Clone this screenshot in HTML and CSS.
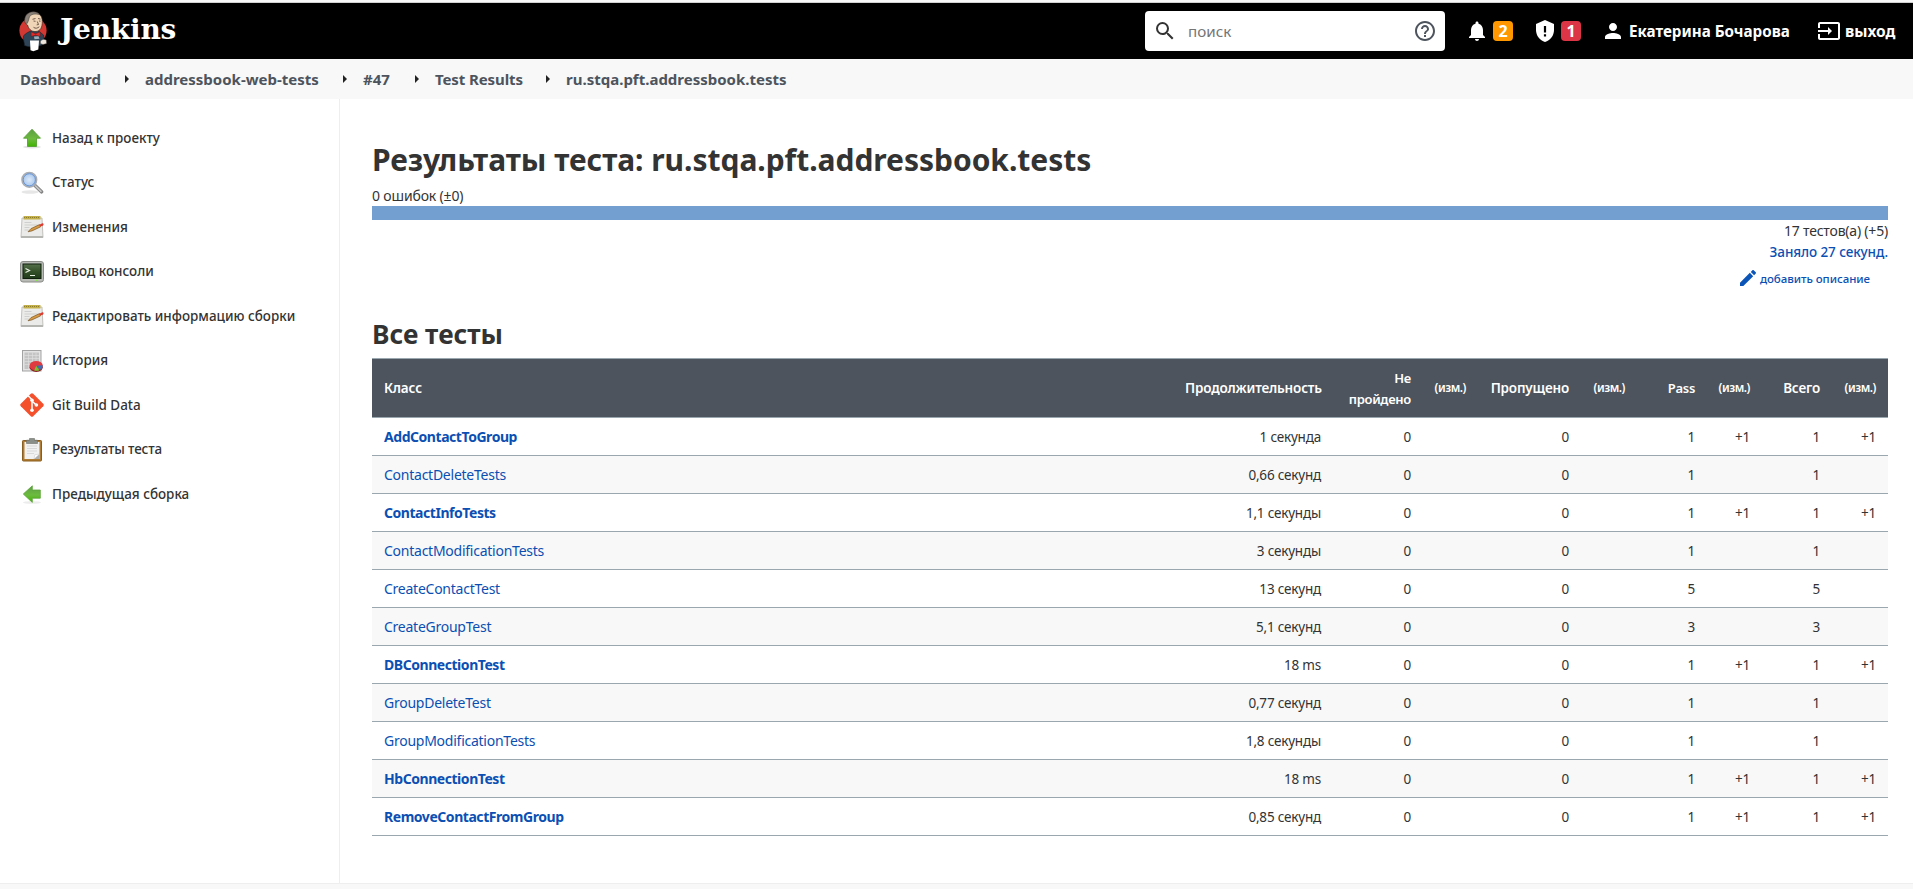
FILE: index.html
```html
<!DOCTYPE html>
<html lang="ru">
<head>
<meta charset="utf-8">
<title>ru.stqa.pft.addressbook.tests [Jenkins]</title>
<link rel="stylesheet" href="styles.css">
</head>
<body>
<svg class="defs" width="0" height="0">
  <defs>
    <linearGradient id="green" x1="0" y1="0" x2="0" y2="1"><stop offset="0" stop-color="#5c9e45"/><stop offset=".55" stop-color="#6dbb3f"/><stop offset="1" stop-color="#3fb400"/></linearGradient>
    <linearGradient id="screen" x1="0" y1="0" x2="0" y2="1"><stop offset="0" stop-color="#55704b"/><stop offset=".5" stop-color="#34512a"/><stop offset="1" stop-color="#1f3a18"/></linearGradient>
    <radialGradient id="lens"><stop offset="0" stop-color="#dceafa"/><stop offset="1" stop-color="#a3c3ea"/></radialGradient>
    <symbol id="notepad" viewBox="0 0 24 24">
      <path d="M2 3h20l1 19.500H1z" fill="#ebebe9" stroke="#b5b4b0" stroke-width=".8"/>
      <path d="M1 21h22v2H1z" fill="#b5b5b2"/>
      <path d="M3.500 1h17v3.500h-17z" fill="#c4b04a"/>
      <path d="M4 2.500h16" stroke="#8d7c2a" stroke-dasharray="1 1"/>
      <path d="M4.500 7.500h7M4.500 10h14M4.500 12.500h5M4.500 15h4" stroke="#c8c8c8" stroke-width=".8"/>
      <path d="M8 16.800l3-3.200 8.500-4 1 2.300-8.500 4z" fill="#d79b45" stroke="#6d4a1c" stroke-width=".6"/>
      <path d="M19.300 9.800l3-1.500c1.200-.2 1.700 1.300.8 2l-2.600 1.500z" fill="#de3a2e"/>
    </symbol>
  </defs>
</svg>
<div class="topline"></div>
<header class="header">
  <a class="logo">
    <svg class="logo-mark" viewBox="0 0 30 41" width="30" height="41">
      <ellipse cx="15" cy="19.500" rx="13.600" ry="13.200" fill="#d33833"/>
      <path d="M5.500 25c2-3 6-4.500 9-5.500l6 .5 5 4 .5 5-2 5c-4 2-13 2.500-17.500.5 0-3-1.500-6-1-9.500z" fill="#2f4557" stroke="#16222c" stroke-width=".6"/>
      <path d="M7.500 9C7.500 4 11 1.200 15.500 1.200c5.500 0 9 4 8.800 9.300 0 5.500-1.600 9.500-6.300 10-5.500.5-7.500-3.500-8.500-6.500C7.500 13.500 7 11 7.500 9z" fill="#f0d6b7" stroke="#3a2d26" stroke-width=".7"/>
      <path d="M7 12C5.500 6 9 .8 15.500.8c2.500 0 5 1 6.500 3-5-1.600-9-.6-10.500 2-.6 2-.9 4-2.300 6.600z" fill="#8a837b" stroke="#3a332d" stroke-width=".5"/>
      <path d="M14.500 8.300l3-.8M20 7.500l2.500.6M15.500 10l2 .3M21 10l1.500.2M19.300 10.500l1.200 3-1.800.4M15.500 16.300c2 1.500 4 1 5.800-.6" fill="none" stroke="#503a30" stroke-width=".8"/>
      <path d="M13 20.800l4.500 2 4.500-2 .3 4.700-4.800-1.400-4.300 1.500z" fill="#e12b29" stroke="#6e1615" stroke-width=".5"/>
      <path d="M16 25.500l4.500-.3 1 2.500-5 .6z" fill="#9fb0bd"/>
      <path d="M12 29.500h9l-.7 9-5 1.800-2.800-1z" fill="#fff"/>
      <path d="M22.500 30c1.500-2 4.500-2 5.800-.8l.2 3.300-3.500 1-2.500-1z" fill="#ece6df" stroke="#5a5048" stroke-width=".4"/>
    </svg>
    <span class="logo-name">Jenkins</span>
  </a>
  <div class="search">
    <svg class="i-search" viewBox="0 0 24 24" width="24" height="24"><path fill="#333" d="M15.500 14h-.79l-.28-.27A6.471 6.471 0 0 0 16 9.500 6.500 6.500 0 1 0 9.500 16c1.610 0 3.090-.59 4.230-1.570l.27.280v.790l5 4.990L20.490 19l-4.990-5zm-6 0C7.010 14 5 11.990 5 9.500S7.010 5 9.500 5 14 7.010 14 9.500 11.990 14 9.500 14z"/></svg>
    <span class="search-text">поиск</span>
    <svg class="i-help" viewBox="0 0 24 24" width="24" height="24"><path fill="#4d545d" d="M11 18h2v-2h-2v2zm1-16C6.480 2 2 6.480 2 12s4.480 10 10 10 10-4.480 10-10S17.520 2 12 2zm0 18c-4.410 0-8-3.590-8-8s3.590-8 8-8 8 3.590 8 8-3.590 8-8 8zm0-14c-2.210 0-4 1.790-4 4h2c0-1.100.9-2 2-2s2 .9 2 2c0 2-3 1.750-3 5h2c0-2.250 3-2.500 3-5 0-2.210-1.790-4-4-4z"/></svg>
  </div>
  <a class="alert">
    <svg viewBox="0 0 24 24" width="24" height="24"><path fill="#fff" d="M12 22c1.100 0 2-.9 2-2h-4c0 1.100.9 2 2 2zm6-6v-5c0-3.070-1.640-5.640-4.500-6.320V4c0-.83-.67-1.500-1.500-1.500s-1.500.67-1.500 1.500v.68C7.630 5.360 6 7.920 6 11v5l-2 2v1h16v-1l-2-2z"/></svg>
    <span class="badge orange">2</span>
  </a>
  <a class="alert security">
    <svg viewBox="0 0 24 24" width="24" height="24"><path fill="#fff" d="M12 1L3 5v6c0 5.550 3.840 10.740 9 12 5.160-1.260 9-6.450 9-12V5z"/><path fill="#000" d="M10.900 7h2.200v6.500h-2.200zM10.900 15.200h2.200v2.200h-2.200z"/></svg>
    <span class="badge red">1</span>
  </a>
  <a class="user">
    <svg viewBox="0 0 24 24" width="24" height="24"><path fill="#fff" d="M12 12c2.210 0 4-1.790 4-4s-1.790-4-4-4-4 1.790-4 4 1.790 4 4 4zm0 2c-2.670 0-8 1.340-8 4v2h16v-2c0-2.660-5.330-4-8-4z"/></svg>
    <span class="user-name">Екатерина Бочарова</span>
  </a>
  <a class="logout">
    <svg viewBox="0 0 24 24" width="24" height="24"><path fill="#fff" d="M21 3.010H3c-1.100 0-2 .9-2 2V9h2V4.990h18v14.030H3V15H1v4.010c0 1.100.9 1.980 2 1.980h18c1.100 0 2-.88 2-1.980v-14c0-1.110-.9-2-2-2zM11 16l4-4-4-4v3H1v2h10v3z"/></svg>
    <span class="logout-text">выход</span>
  </a>
</header>
<nav class="crumbs">
  <a class="c1">Dashboard</a><i class="tri"></i>
  <a class="c2">addressbook-web-tests</a><i class="tri"></i>
  <a class="c3">#47</a><i class="tri"></i>
  <a class="c4">Test Results</a><i class="tri"></i>
  <a class="c5">ru.stqa.pft.addressbook.tests</a>
</nav>
<div class="page">
  <aside class="side">
    <a class="task"><svg viewBox="0 0 24 24" width="24" height="24"><ellipse cx="12" cy="21" rx="9" ry="1.500" fill="#e4e4e4"/><path d="M12 3.200l8.500 9h-4V20.500h-9v-8.300h-4z" fill="url(#green)" stroke="#4c9a2a" stroke-width=".8"/></svg><span>Назад к проекту</span></a>
    <a class="task"><svg viewBox="0 0 24 24" width="24" height="24"><ellipse cx="10" cy="21" rx="8.500" ry="1.700" fill="#e6e6e6"/><path d="M15 14.500l6.500 6.300" stroke="#858585" stroke-width="3.600" stroke-linecap="round"/><path d="M15.500 15l5.500 5.300" stroke="#c8c8c8" stroke-width="1.600" stroke-linecap="round"/><circle cx="9.300" cy="8.800" r="7.300" fill="url(#lens)" stroke="#a9adb2" stroke-width="1.600"/><circle cx="9.300" cy="8.800" r="6.100" fill="none" stroke="#5f8fd0" stroke-width=".9"/></svg><span>Статус</span></a>
    <a class="task"><svg width="24" height="24"><use href="#notepad"/></svg><span>Изменения</span></a>
    <a class="task"><svg viewBox="0 0 24 24" width="24" height="24"><rect x=".5" y="1.500" width="23" height="20.500" rx="2.500" fill="#b9bbb6" stroke="#8b8d88"/><rect x="3" y="4" width="18" height="14.500" fill="url(#screen)" stroke="#10200c"/><path d="M5.500 8.500l4 2-4 2M10 15.500h5" fill="none" stroke="#e8f0e4" stroke-width="1.200"/><circle cx="16.500" cy="20.300" r=".7" fill="#7ff03a"/></svg><span>Вывод консоли</span></a>
    <a class="task"><svg width="24" height="24"><use href="#notepad"/></svg><span>Редактировать информацию сборки</span></a>
    <a class="task"><svg viewBox="0 0 24 24" width="24" height="24"><rect x="2.500" y="1.500" width="18.500" height="20.500" fill="#e4e4e4" stroke="#a3a3a3"/><rect x="4.500" y="3.500" width="14.500" height="16.500" fill="#c4c4c4"/><path d="M4.500 6.500h14.500M4.500 9.500h14.500M4.500 12.500h14.500M4.500 15.500h14.500M8.500 3.500v16.500M12.500 3.500v16.500M16 3.500v16.500" stroke="#e2e2e2" stroke-width=".6"/><ellipse cx="16.200" cy="18.300" rx="6.600" ry="4.600" fill="#8d1c22"/><ellipse cx="16.200" cy="16.800" rx="6.600" ry="4.900" fill="#df3a40"/><path d="M16.200 16.800l6.500-.5c.3 2.200-.9 3.700-2.700 4.400z" fill="#3d6fb5"/><path d="M16.200 16.800l3.200 4.500c-1.800.7-3.600.7-5.200.2z" fill="#6ec52c"/></svg><span>История</span></a>
    <a class="task"><svg viewBox="0 0 24 24" width="24" height="24"><path d="M10.800.8a1.700 1.700 0 0 1 2.400 0l10 10a1.700 1.700 0 0 1 0 2.400l-10 10a1.700 1.700 0 0 1-2.400 0l-10-10a1.700 1.700 0 0 1 0-2.400z" fill="#f4502c"/><path d="M8.200 2.800L12 6.800v10.700M12 8l4.200 4" fill="none" stroke="#fff" stroke-width="1.500"/><circle cx="12" cy="7.300" r="1.800" fill="#fff"/><circle cx="12" cy="17.200" r="1.800" fill="#fff"/><circle cx="16.400" cy="12" r="1.800" fill="#fff"/></svg><span>Git Build Data</span></a>
    <a class="task tight"><svg viewBox="0 0 24 24" width="24" height="24"><rect x="2.500" y="2.500" width="19" height="20.500" rx=".8" fill="#b07c33" stroke="#8a5c1d"/><rect x="4.500" y="4" width="15" height="17" fill="#f1f1f1"/><path d="M7 8h10M7 10.500h10M7 13h10M7 15.500h7" stroke="#d9d9d9"/><path d="M14 21l5.500-5v5z" fill="#aeaeae"/><path d="M14 21l.8-4.200L19.500 16z" fill="#fff" stroke="#bbb" stroke-width=".4"/><path d="M6.500 2.200h3V.5h5v1.700h3v3.300h-11z" fill="#8b8f8a" stroke="#6b6f6a" stroke-width=".6"/></svg><span>Результаты теста</span></a>
    <a class="task"><svg viewBox="0 0 24 24" width="24" height="24"><ellipse cx="12" cy="20.500" rx="9" ry="1.300" fill="#ececec"/><path d="M3.300 12L12.300 3.800v4.200h8v8.200h-8v4.200z" fill="url(#green)" stroke="#5da33a" stroke-width=".8"/></svg><span>Предыдущая сборка</span></a>
  </aside>
  <main class="main">
    <h1>Результаты теста: ru.stqa.pft.addressbook.tests</h1>
    <div class="fails">0 ошибок (±0)</div>
    <div class="bar"></div>
    <div class="total">17 тестов(а) (+5)</div>
    <div class="took">Заняло 27 секунд.</div>
    <div class="desc"><svg viewBox="3 3 18 18" width="16" height="16"><path fill="#0b54b8" d="M3 17.250V21h3.750L17.810 9.940l-3.750-3.750L3 17.250zM20.710 7.040c.39-.39.39-1.020 0-1.410l-2.340-2.340c-.39-.39-1.020-.39-1.410 0l-1.830 1.830 3.750 3.750 1.830-1.830z"/></svg><span>добавить описание</span></div>
    <h2>Все тесты</h2>
    <table class="grid">
      <colgroup><col><col class="w160"><col class="w90"><col class="w55"><col class="w103"><col class="w56"><col class="w70"><col class="w55"><col class="w70"><col class="w56"></colgroup>
      <thead><tr><th>Класс</th><th>Продолжительность</th><th class="failed">Не<br>пройдено</th><th class="d">(изм.)</th><th>Пропущено</th><th class="d">(изм.)</th><th class="narrow">Pass</th><th class="d">(изм.)</th><th>Всего</th><th class="d">(изм.)</th></tr></thead>
      <tbody>
        <tr class="new"><td><a>AddContactToGroup</a></td><td>1 секунда</td><td>0</td><td></td><td>0</td><td></td><td>1</td><td>+1</td><td>1</td><td>+1</td></tr>
        <tr><td><a>ContactDeleteTests</a></td><td>0,66 секунд</td><td>0</td><td></td><td>0</td><td></td><td>1</td><td></td><td>1</td><td></td></tr>
        <tr class="new"><td><a>ContactInfoTests</a></td><td>1,1 секунды</td><td>0</td><td></td><td>0</td><td></td><td>1</td><td>+1</td><td>1</td><td>+1</td></tr>
        <tr><td><a>ContactModificationTests</a></td><td>3 секунды</td><td>0</td><td></td><td>0</td><td></td><td>1</td><td></td><td>1</td><td></td></tr>
        <tr><td><a>CreateContactTest</a></td><td>13 секунд</td><td>0</td><td></td><td>0</td><td></td><td>5</td><td></td><td>5</td><td></td></tr>
        <tr><td><a>CreateGroupTest</a></td><td>5,1 секунд</td><td>0</td><td></td><td>0</td><td></td><td>3</td><td></td><td>3</td><td></td></tr>
        <tr class="new"><td><a>DBConnectionTest</a></td><td>18 ms</td><td>0</td><td></td><td>0</td><td></td><td>1</td><td>+1</td><td>1</td><td>+1</td></tr>
        <tr><td><a>GroupDeleteTest</a></td><td>0,77 секунд</td><td>0</td><td></td><td>0</td><td></td><td>1</td><td></td><td>1</td><td></td></tr>
        <tr><td><a>GroupModificationTests</a></td><td>1,8 секунды</td><td>0</td><td></td><td>0</td><td></td><td>1</td><td></td><td>1</td><td></td></tr>
        <tr class="new"><td><a>HbConnectionTest</a></td><td>18 ms</td><td>0</td><td></td><td>0</td><td></td><td>1</td><td>+1</td><td>1</td><td>+1</td></tr>
        <tr class="new"><td><a>RemoveContactFromGroup</a></td><td>0,85 секунд</td><td>0</td><td></td><td>0</td><td></td><td>1</td><td>+1</td><td>1</td><td>+1</td></tr>
      </tbody>
    </table>
  </main>
</div>
<footer class="footer"></footer>
</body>
</html>
```
FILE: styles.css
```css
* { box-sizing: border-box; }
body { margin: 0; height: 889px; overflow: hidden; background: #fff; color: #333; font: 14px/21px "Noto Sans", "Open Sans", sans-serif; display: flex; flex-direction: column; white-space: nowrap; }
svg { flex: none; display: block; }
.defs { position: absolute; }
.topline { height: 3px; flex: none; background: #f8f8f8; border-bottom: 1px solid #d0d0d0; }
.header { height: 56px; flex: none; background: #000; color: #fff; display: flex; align-items: center; font-weight: 700; font-size: 15.200px; }
.logo { display: flex; align-items: center; margin-left: 18px; margin-right: auto; }
.logo-name { font: 700 28px/40px "DejaVu Serif", serif; margin: -2px 0 0 12px; letter-spacing: -.2px; }
.search { width: 300px; height: 40px; background: #fff; border-radius: 4px; display: flex; align-items: center; padding: 0 8px; margin-right: 20px; }
.search-text { flex: 1; color: #757575; font-weight: 400; font-size: 15.200px; margin-left: 11px; padding-top: 1px; }
.alert { display: flex; align-items: center; gap: 4px; width: 68px; }
.badge { width: 20px; height: 20px; border-radius: 4px; font-size: 16px; line-height: 20px; text-align: center; }
.orange { background: #ff9800; }
.red { background: #dc3545; }
.user { display: flex; align-items: center; gap: 4px; width: 216px; }
.logout { display: flex; align-items: center; gap: 4px; width: 96px; font-size: 15.500px; }
.crumbs { height: 40px; flex: none; background: #f8f8f8; color: #4d545d; font-weight: 700; font-size: 15px; display: flex; align-items: center; padding-left: 20px; }
.crumbs .c1 { width: 105px; }
.tri { border: 4px solid transparent; border-left-color: #222; border-right: 0; width: 4px; margin-right: 16px; }
.crumbs .c2 { width: 198px; }
.crumbs .c3 { width: 52px; }
.crumbs .c4 { width: 111px; letter-spacing: -.1px; }
.page { flex: 1; display: flex; min-height: 0; }
.side { width: 340px; flex: none; border-right: 1px solid #eee; padding: 17px 0 0 20px; }
.task { height: 44.500px; display: flex; align-items: center; gap: 8px; font-weight: 500; font-size: 13.450px; }
.tight { letter-spacing: -.15px; }
.main { flex: 1; padding: 39px 25px 0 32px; }
h1 { margin: 0; font-size: 30px; line-height: 44px; height: 48px; font-weight: 700; letter-spacing: -.04px; }
.fails { height: 20px; line-height: 20px; letter-spacing: -.15px; }
.bar { height: 14px; background: #729fcf; }
.total { text-align: right; height: 21px; letter-spacing: -.2px; }
.took { text-align: right; color: #0b4fb3; font-weight: 500; height: 21px; line-height: 23px; font-size: 13.500px; letter-spacing: -.1px; }
.desc { display: flex; justify-content: flex-end; align-items: center; gap: 4px; padding-right: 18px; height: 32px; color: #0b4fb3; font-weight: 500; font-size: 11.500px; letter-spacing: -.05px; }
h2 { margin: 0; padding-top: 20px; font-size: 26.300px; line-height: 40px; height: 64px; font-weight: 700; }
.grid { width: 1516px; table-layout: fixed; border-collapse: collapse; }
.w160 { width: 160px; }
.w90 { width: 90px; }
.w55 { width: 55px; }
.w103 { width: 103px; }
.w56 { width: 56px; }
.w70 { width: 70px; }
.grid th { height: 59px; padding: 1px 12px 0; background: #4d545d; color: #fff; text-align: right; font-size: 13.500px; letter-spacing: -.18px; font-weight: 600; border-top: 1px solid #9ba7af; border-bottom: 1px solid #9ba7af; }
.grid .failed { font-size: 13px; letter-spacing: -.3px; }
.grid .narrow { font-size: 13px; letter-spacing: -.3px; }
.grid .d { font-size: 11.800px; letter-spacing: -.45px; padding: 0 12px 1px 0; }
.grid td { height: 38px; padding: 1px 12px 0; text-align: right; border-bottom: 1px solid #9ba7af; font-size: 13.500px; letter-spacing: -.2px; }
.grid td:empty { padding: 0; }
.grid th:first-child, .grid td:first-child { text-align: left; }
.grid tbody tr:nth-child(even) { background: #f8f8f8; }
.grid a { color: #0b4fb3; font-size: 14px; letter-spacing: -.25px; }
.grid .new a { font-weight: 700; letter-spacing: -.45px; }
.footer { height: 6px; flex: none; background: #f8f8f8; border-top: 1px solid #eee; }
```
